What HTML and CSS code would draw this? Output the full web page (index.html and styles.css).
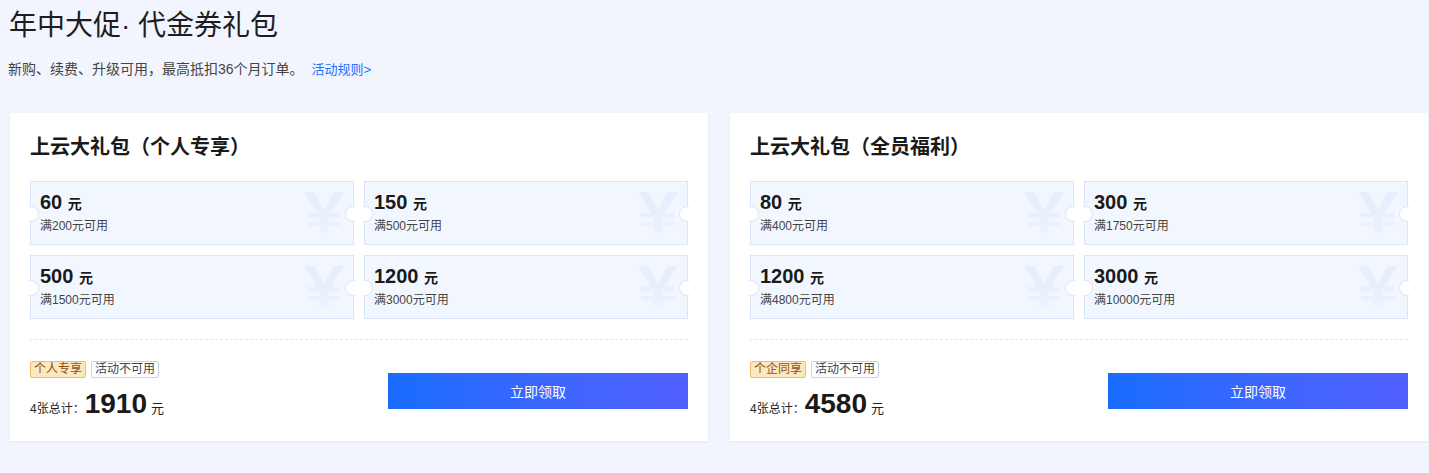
FILE: index.html
```html
<!DOCTYPE html>
<html lang="zh-CN">
<head>
<meta charset="utf-8">
<title>年中大促· 代金券礼包</title>
<link rel="stylesheet" href="styles.css">
</head>
<body>
<div class="page">
  <h1 class="title">年中大促· 代金券礼包</h1>
  <p class="subtitle">新购、续费、升级可用，最高抵扣36个月订单。<a class="rule-link" href="#">活动规则&gt;</a></p>

  <div class="cards">
    <section class="card">
      <h2 class="card-title">上云大礼包（个人专享）</h2>
      <div class="coupons">
        <div class="coupon">
          <div class="amount">60 <span class="unit">元</span></div>
          <div class="cond">满200元可用</div>
          <div class="mark">¥</div>
        </div>
        <div class="coupon">
          <div class="amount">150 <span class="unit">元</span></div>
          <div class="cond">满500元可用</div>
          <div class="mark">¥</div>
        </div>
        <div class="coupon">
          <div class="amount">500 <span class="unit">元</span></div>
          <div class="cond">满1500元可用</div>
          <div class="mark">¥</div>
        </div>
        <div class="coupon">
          <div class="amount">1200 <span class="unit">元</span></div>
          <div class="cond">满3000元可用</div>
          <div class="mark">¥</div>
        </div>
      </div>
      <div class="divider"></div>
      <div class="footer">
        <div class="summary">
          <div class="tags">
            <span class="tag tag-gold">个人专享</span>
            <span class="tag tag-plain">活动不可用</span>
          </div>
          <div class="total"><span class="total-label">4张总计：</span><span class="total-num">1910</span><span class="total-unit">元</span></div>
        </div>
        <button class="btn">立即领取</button>
      </div>
    </section>

    <section class="card">
      <h2 class="card-title">上云大礼包（全员福利）</h2>
      <div class="coupons">
        <div class="coupon">
          <div class="amount">80 <span class="unit">元</span></div>
          <div class="cond">满400元可用</div>
          <div class="mark">¥</div>
        </div>
        <div class="coupon">
          <div class="amount">300 <span class="unit">元</span></div>
          <div class="cond">满1750元可用</div>
          <div class="mark">¥</div>
        </div>
        <div class="coupon">
          <div class="amount">1200 <span class="unit">元</span></div>
          <div class="cond">满4800元可用</div>
          <div class="mark">¥</div>
        </div>
        <div class="coupon">
          <div class="amount">3000 <span class="unit">元</span></div>
          <div class="cond">满10000元可用</div>
          <div class="mark">¥</div>
        </div>
      </div>
      <div class="divider"></div>
      <div class="footer">
        <div class="summary">
          <div class="tags">
            <span class="tag tag-gold">个企同享</span>
            <span class="tag tag-plain">活动不可用</span>
          </div>
          <div class="total"><span class="total-label">4张总计：</span><span class="total-num">4580</span><span class="total-unit">元</span></div>
        </div>
        <button class="btn">立即领取</button>
      </div>
    </section>
  </div>
</div>
</body>
</html>
```

FILE: styles.css
```css
* { box-sizing: border-box; }

html, body {
  margin: 0;
  padding: 0;
}

body {
  background: #f3f5fe;
  font-family: "Liberation Sans", "Noto Sans CJK SC", sans-serif;
  color: #222;
}

.page {
  padding: 8px 1px 0 10px;
  min-height: 473px;
}

.title {
  margin: 0 0 0 -1px;
  font-size: 28px;
  line-height: 36px;
  font-weight: 400;
  color: #1d1d1f;
}

.subtitle {
  margin: 15px 0 0 -2px;
  font-size: 14px;
  line-height: 20px;
  color: #444;
}

.rule-link {
  margin-left: 8px;
  font-size: 13px;
  color: #1a6fff;
  text-decoration: none;
}

.cards {
  margin-top: 33px;
  display: flex;
  gap: 22px;
}

.card {
  width: 698px;
  background: #fff;
  padding: 20px 20px 20px 20px;
  box-shadow: 0 1px 3px rgba(30, 50, 120, 0.08);
}

.card-title {
  margin: 0;
  font-size: 20px;
  line-height: 28px;
  font-weight: 700;
  color: #1a1a1a;
}

.coupons {
  margin-top: 20px;
  display: grid;
  grid-template-columns: 1fr 1fr;
  gap: 10px;
}

.coupon {
  position: relative;
  height: 64px;
  background: #f2f7ff;
  border: 1px solid #d8e5fb;
  padding: 7px 9px 0 9px;
}

.coupon::before,
.coupon::after {
  content: "";
  position: absolute;
  top: 50%;
  width: 14px;
  height: 14px;
  margin-top: -7px;
  border-radius: 50%;
  background: #fff;
  border: 1px solid #d8e5fb;
  z-index: 2;
}

.coupon::before {
  left: -8px;
  clip-path: inset(0 0 0 6px);
}

.coupon::after {
  right: -8px;
  clip-path: inset(0 6px 0 0);
}

.amount {
  position: relative;
  z-index: 1;
  font-size: 20px;
  line-height: 26px;
  font-weight: 700;
  color: #1a1a1a;
}

.unit {
  font-size: 14px;
  font-weight: 700;
}

.cond {
  position: relative;
  z-index: 1;
  font-size: 12px;
  line-height: 18px;
  color: #444;
}

.mark {
  position: absolute;
  right: 8px;
  top: 1px;
  width: 42px;
  text-align: center;
  font-family: "Liberation Sans", sans-serif;
  font-size: 60px;
  line-height: 60px;
  font-weight: 700;
  background: linear-gradient(180deg, #e5eefd 0%, #e8f0fd 60%, #eff5fe 100%);
  -webkit-background-clip: text;
  background-clip: text;
  color: transparent;
  transform: scaleX(1.2);
}

.divider {
  margin-top: 20px;
  border-top: 1px dashed #e6e8ee;
}

.footer {
  margin-top: 21px;
  display: flex;
  align-items: center;
  justify-content: space-between;
}

.tags {
  display: flex;
  gap: 5px;
}

.tag {
  display: inline-block;
  height: 17px;
  padding: 0 3px;
  font-size: 12px;
  line-height: 15px;
  border: 1px solid;
  border-radius: 2px;
}

.tag-gold {
  background: #fde7bd;
  border-color: #f0bd6c;
  color: #8c4c1a;
}

.tag-plain {
  background: #fff;
  border-color: #cfd2e6;
  color: #444;
}

.total {
  margin-top: 8px;
  height: 35px;
  font-size: 28px;
  line-height: 35px;
  white-space: nowrap;
}

.total-label {
  font-size: 12px;
  line-height: 1;
  color: #222;
}

.total-num {
  font-size: 28px;
  font-weight: 700;
  color: #1a1a1a;
}

.total-unit {
  margin-left: 4px;
  font-size: 13px;
  line-height: 1;
  color: #222;
}

.btn {
  width: 300px;
  height: 36px;
  border: 0;
  padding: 0;
  background: linear-gradient(90deg, #1a6cff 0%, #3d66ff 55%, #5160ff 100%);
  color: #fff;
  font-family: "Liberation Sans", "Noto Sans CJK SC", sans-serif;
  font-size: 14px;
  cursor: pointer;
}
```
